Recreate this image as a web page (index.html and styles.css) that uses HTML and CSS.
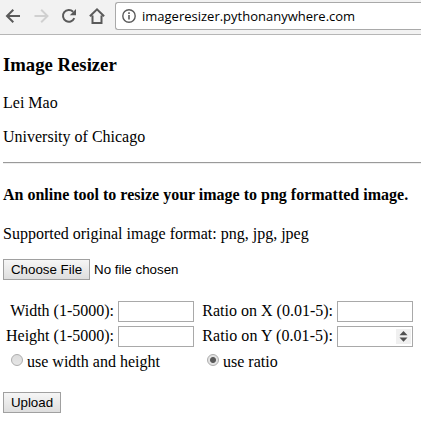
FILE: index.html
```html
<!DOCTYPE html>
<html lang="en">
<head>
<meta charset="utf-8">
<title>Image Resizer</title>
<link rel="stylesheet" href="styles.css">
</head>
<body>
<header class="toolbar">
  <svg class="nav" width="115" height="34" viewBox="0 0 115 34" fill="none" stroke="#5a5a5a" stroke-width="2">
    <path d="M20 16H7.5M13.3 9.7L7 16l6.3 6.3"/>
    <path stroke="#d0d0d0" d="M34.500 16H47M41.200 9.700L47.500 16l-6.300 6.300"/>
    <path d="M74.300 18.200A5.900 5.900 0 1 1 73.100 11.700"/>
    <path fill="#5a5a5a" stroke="none" d="M76 9v6.200h-6.200z"/>
    <path d="M92.500 15.500V23h9v-7.500M89.900 16.200L97 9.300l7.100 6.900"/>
  </svg>
  <div class="address">
    <svg class="info" width="14" height="14" viewBox="0 0 14 14" fill="none" stroke="#5a5a5a">
      <circle cx="7" cy="7" r="6.200" stroke-width="1.400"/>
      <path stroke-width="1.600" d="M7 6v4.500M7 3.300v1.600"/>
    </svg>
    <span class="url">imageresizer.pythonanywhere.com</span>
  </div>
</header>
<main class="page">
  <h3>Image Resizer</h3>
  <p>Lei Mao</p>
  <p>University of Chicago</p>
  <hr>
  <h4>An online tool to resize your image to png formatted image.</h4>
  <p class="formats">Supported original image format: png, jpg, jpeg</p>
  <div class="file">
    <button class="btn choose" type="button">Choose File</button>
    <span>No file chosen</span>
  </div>
  <form class="options">
    <label class="name" for="w">Width (1-5000):</label><input class="field" id="w">
    <label class="name" for="x">Ratio on X (0.01-5):</label><input class="field" id="x">
    <label class="name" for="h">Height (1-5000):</label><input class="field" id="h">
    <label class="name ratio-y" for="y">Ratio on Y (0.01-5):</label>
    <div class="field number">
      <svg class="spin" width="15" height="15" viewBox="0 0 15 15">
        <path fill="#f0f0f0" d="M0 0h15v15H0z"/>
        <path fill="#505050" d="M7.500 2L11.500 6.300h-8zM7.500 12.700L3.500 8.500h8z"/>
      </svg>
    </div>
    <div class="choice"><i class="radio"></i><span>use width and height</span></div>
    <div class="choice"><i class="radio on"></i><span>use ratio</span></div>
  </form>
  <button class="btn upload" type="button">Upload</button>
</main>
</body>
</html>
```
FILE: styles.css
```css
* { box-sizing: border-box; }
body {
  margin: 0;
  height: 421px;
  overflow: hidden;
  background: #fff;
  color: #000;
  font: 16px/18px "Liberation Serif", serif;
}
.toolbar {
  display: flex;
  height: 35px;
  background: #f2f2f2;
  border-bottom: 1px solid #b6b6b6;
}
.nav { flex: none; }
.address {
  flex: 1;
  display: flex;
  align-items: center;
  gap: 6px;
  height: 28px;
  margin-top: 2px;
  padding-left: 6px;
  background: #fff;
  border: 1px solid #a9a9a9;
  border-right: 0;
  border-radius: 3px 0 0 3px;
}
.info { flex: none; }
.url {
  font: 13px/20px "Open Sans", sans-serif;
  white-space: nowrap;
}
.page { padding: 19px 0 0 3px; }
h3 {
  margin: 0 0 19px;
  font-size: 18.72px;
  line-height: 21px;
}
p { margin: 0 0 16px; }
hr {
  height: 2px;
  margin: 0 0 22px;
  border: 0;
  border-top: 1px solid #9a9a9a;
  border-bottom: 1px solid #eee;
}
h4 {
  margin: 0 0 21px;
  font-size: 16px;
  white-space: nowrap;
}
.file {
  display: flex;
  align-items: center;
  gap: 4px;
  height: 21px;
  font: 13.333px/15px "Liberation Sans", sans-serif;
}
.btn {
  display: block;
  height: 21px;
  padding: 0;
  border: 1px solid #a0a0a0;
  border-radius: 0;
  background: linear-gradient(#f6f6f6, #dedede);
  color: #000;
  font: 13.333px/15px "Liberation Sans", sans-serif;
}
.choose { width: 87px; }
.upload { width: 58px; margin-top: 20px; }
.options {
  display: grid;
  grid-template-columns: 112px 76px 143px 76px;
  grid-template-rows: 21px 21px 21px;
  row-gap: 4px;
  margin-top: 21px;
  padding-left: 3px;
}
.name {
  padding: 1px 4px 0 0;
  text-align: right;
  white-space: nowrap;
}
.ratio-y { letter-spacing: 0.06px; }
.field {
  width: 76px;
  height: 21px;
  padding: 0;
  border: 1px solid #a9a9a9;
  background: #fff;
}
.number {
  display: flex;
  align-items: center;
  justify-content: flex-end;
  padding-right: 1px;
}
.choice {
  grid-column: span 2;
  display: flex;
  padding: 2px 0 0 5px;
}
.choice + .choice { padding-left: 13px; }
.radio {
  flex: none;
  width: 12px;
  height: 12px;
  margin: 1px 4px 0 0;
  border: 1px solid #adadad;
  border-radius: 50%;
  background: linear-gradient(#dcdcdc, #e6e6e6);
}
.on { background: radial-gradient(circle, #595959 0 2.5px, #e2e2e2 3.5px); }
```
